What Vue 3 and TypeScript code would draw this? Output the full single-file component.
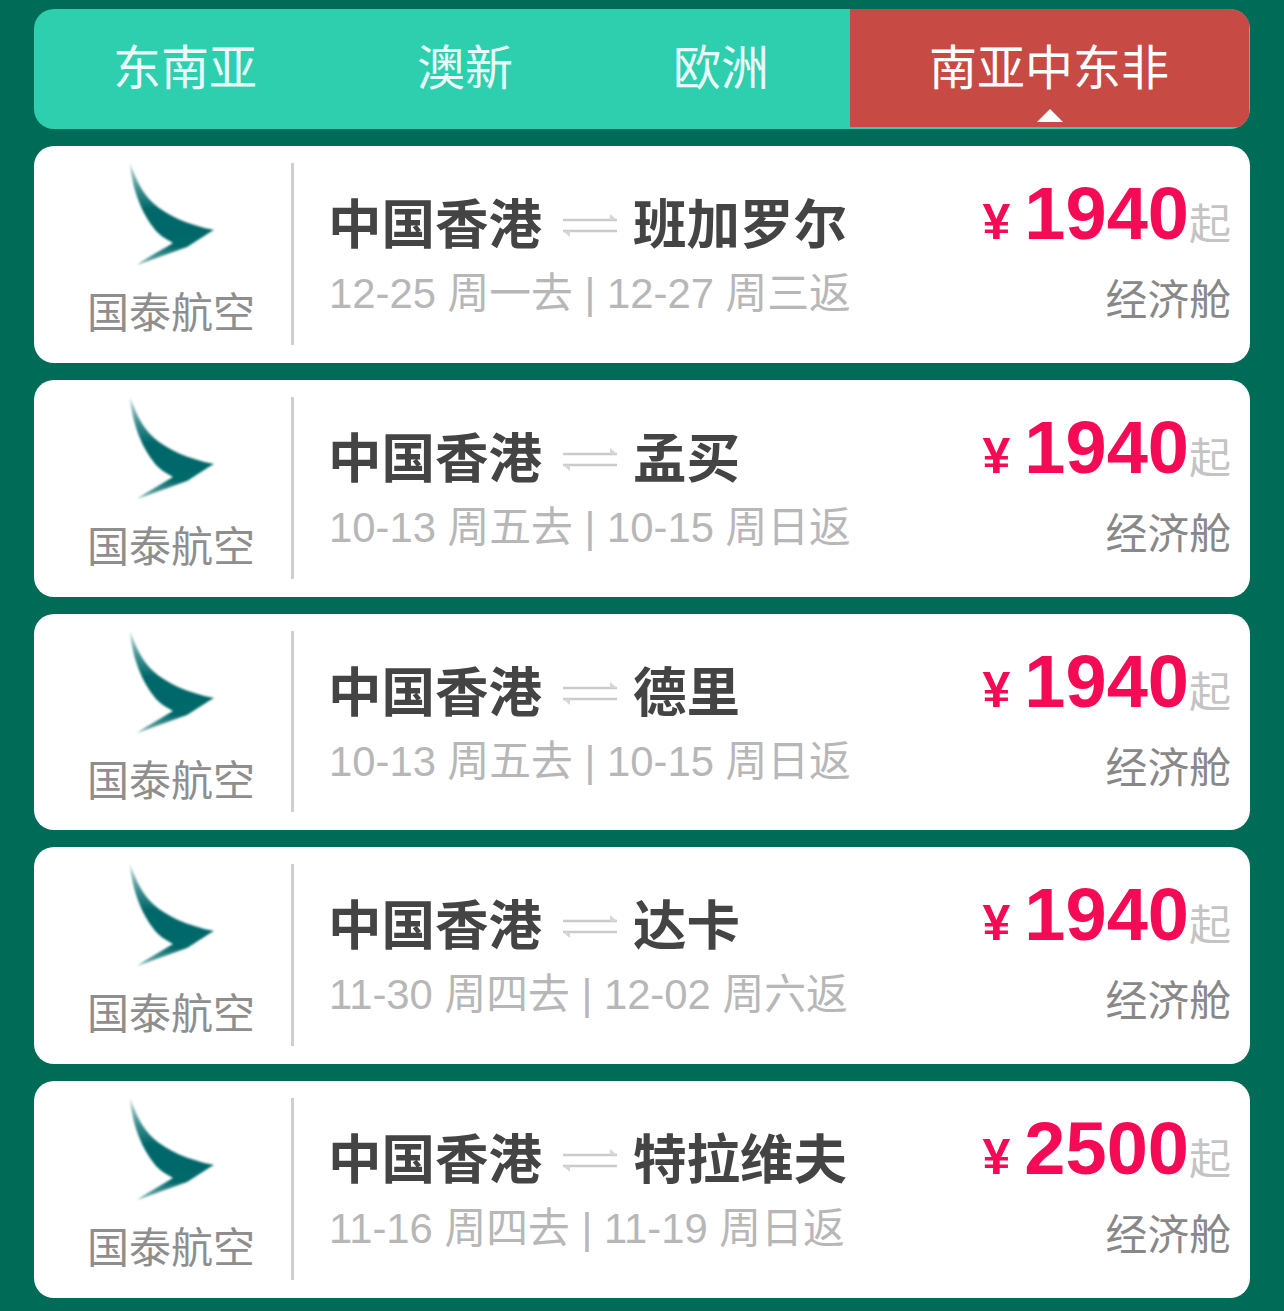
<script setup lang="ts">
interface Flight {
  dest: string
  dates: string
  price: number
}

const tabs = ['东南亚', '澳新', '欧洲', '南亚中东非']
const activeTab = 3

const flights: Flight[] = [
  { dest: '班加罗尔', dates: '12-25 周一去 | 12-27 周三返', price: 1940 },
  { dest: '孟买', dates: '10-13 周五去 | 10-15 周日返', price: 1940 },
  { dest: '德里', dates: '10-13 周五去 | 10-15 周日返', price: 1940 },
  { dest: '达卡', dates: '11-30 周四去 | 12-02 周六返', price: 1940 },
  { dest: '特拉维夫', dates: '11-16 周四去 | 11-19 周日返', price: 2500 },
]
</script>

<template>
  <div class="page">
    <div class="tabs">
      <div v-for="(tab, i) in tabs" :key="tab" class="tab" :class="{ active: i === activeTab }">
        {{ tab }}
        <span v-if="i === activeTab" class="caret" />
      </div>
    </div>

    <div class="list">
      <div v-for="(f, i) in flights" :key="i" class="card">
        <div class="airline">
          <svg class="logo" width="88" height="106" viewBox="-2 -2 88 106">
            <defs>
              <linearGradient :id="'wing' + i" x1="0" y1="0" x2="0" y2="1">
                <stop offset="0" stop-color="#c3dede" />
                <stop offset="0.25" stop-color="#3f8f90" />
                <stop offset="0.45" stop-color="#00686a" />
                <stop offset="0.82" stop-color="#04696b" />
                <stop offset="1" stop-color="#7fb6b6" />
              </linearGradient>
              <filter :id="'soft' + i" x="-10%" y="-10%" width="120%" height="120%">
                <feGaussianBlur stdDeviation="0.8" />
              </filter>
            </defs>
            <path
              d="M0 0C6 16 12 30 23 40C36 52 58 62 84 67C72 74 62 81 57 84L7 102C18 94 32 87 43 80C32 74 27 70 23 64C12 50 2 26 0 0Z"
              :fill="'url(#wing' + i + ')'"
              :filter="'url(#soft' + i + ')'"
            />
          </svg>
          <div class="airline-name">国泰航空</div>
        </div>

        <div class="info">
          <div class="route">
            <span>中国香港</span>
            <svg class="swap" width="54" height="26" viewBox="0 0 54 26">
              <path d="M0 7H54M0 18H54" stroke="#cbcbcb" stroke-width="2.4" />
              <path d="M47 1L54 7H47ZM0 18H7V24Z" fill="#d6d6d6" />
            </svg>
            <span>{{ f.dest }}</span>
          </div>
          <div class="dates">{{ f.dates }}</div>
        </div>

        <div class="fare">
          <div class="price">
            <span class="yen">¥</span>
            <span class="amount">{{ f.price }}</span>
            <span class="from">起</span>
          </div>
          <div class="cabin">经济舱</div>
        </div>
      </div>
    </div>
  </div>
</template>

<style>
html, body {
  margin: 0;
  background: #006b56;
}
</style>

<style scoped>
.page {
  height: 1311px;
  box-sizing: border-box;
  padding: 9px 34px 0;
  background: #006b56;
  font-family: "Liberation Sans", "Noto Sans CJK SC", sans-serif;
  overflow: hidden;
}

.tabs {
  display: flex;
  height: 120px;
  box-sizing: border-box;
  border-radius: 20px;
  overflow: hidden;
  background: #2dcfae;
  padding: 0 1px 2px 0;
}

.tab {
  position: relative;
  padding: 0 81px 0 79px;
  font-size: 48px;
  line-height: 120px;
  color: #e9fbf6;
  white-space: nowrap;
}

.tab.active {
  flex: 1;
  padding: 0 80px 0 79px;
  background: #c74a44;
  color: #fff;
}

.caret {
  position: absolute;
  left: 187px;
  bottom: 5px;
  width: 0;
  height: 0;
  border-left: 13px solid transparent;
  border-right: 13px solid transparent;
  border-bottom: 13px solid #fff;
}

.list {
  display: flex;
  flex-direction: column;
  gap: 17px;
  margin-top: 17px;
}

.card {
  display: flex;
  height: 216.75px;
  box-sizing: border-box;
  padding: 17px 19px 18px 0;
  background: #fff;
  border-radius: 20px;
}

.airline {
  width: 260px;
  box-sizing: border-box;
  padding: 0 38px 0 53px;
  border-right: 3px solid #cfcfcf;
  display: flex;
  flex-direction: column;
}

.logo {
  display: block;
  margin: -2px 0 0 41px;
}

.airline-name {
  margin-top: 21px;
  font-size: 42px;
  line-height: 52px;
  color: #8e8e8e;
  white-space: nowrap;
}

.info {
  padding: 30px 0 0 35px;
}

.route {
  display: flex;
  align-items: center;
  margin-left: -1px;
  font-size: 53.5px;
  font-weight: 700;
  line-height: 66px;
  color: #444;
  white-space: nowrap;
}

.swap {
  margin: 0 16px 0 21px;
}

.dates {
  margin-top: 9px;
  font-size: 41.8px;
  line-height: 52px;
  color: #b7b7b7;
  white-space: nowrap;
}

.fare {
  margin-left: auto;
  padding-top: 9px;
  display: flex;
  flex-direction: column;
  align-items: flex-end;
}

.price {
  display: flex;
  align-items: baseline;
  white-space: nowrap;
  height: 84px;
}

.yen {
  font-size: 50px;
  font-weight: 700;
  color: #f50a55;
  margin-right: 14px;
}

.amount {
  font-size: 74px;
  line-height: 84px;
  font-weight: 700;
  color: #f50a55;
}

.from {
  font-size: 42px;
  color: #c4c4c4;
}

.cabin {
  margin-top: 19px;
  font-size: 41.8px;
  line-height: 52px;
  color: #888;
  white-space: nowrap;
}
</style>
